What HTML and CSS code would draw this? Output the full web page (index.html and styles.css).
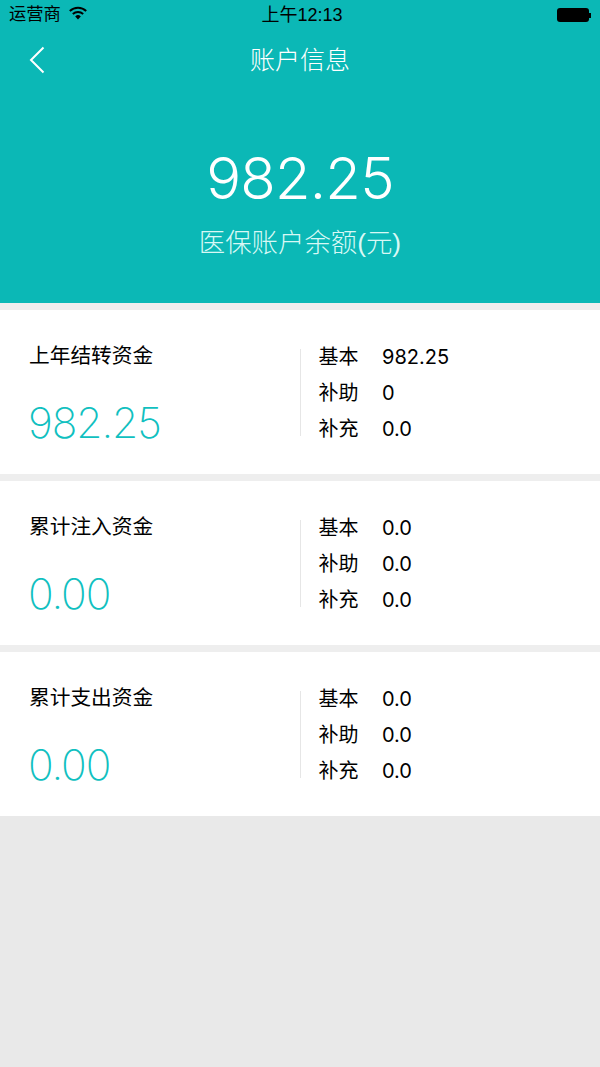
FILE: index.html
```html
<!DOCTYPE html>
<html lang="zh-CN">
<head>
    <meta charset="UTF-8">
    <meta name="viewport" content="width=device-width, initial-scale=1.0">
    <title>账户信息</title>
    <link rel="stylesheet" href="styles.css">
</head>
<body>
    <div class="header">
        <div class="status-bar">
            <div class="carrier">
                <span>运营商</span>
                <svg class="wifi" viewBox="0 0 18 14" width="18" height="14">
                    <path d="M0.8 5 A12 12 0 0 1 17.2 5" fill="none" stroke="#000" stroke-width="2"/>
                    <path d="M3.8 8 A8 8 0 0 1 14.2 8" fill="none" stroke="#000" stroke-width="2"/>
                    <path d="M6.2 10.4 L9 13.5 L11.8 10.4 A4 4 0 0 0 6.2 10.4 Z" fill="#000"/>
                </svg>
            </div>
            <div class="clock">上午12:13</div>
            <div class="battery"><div class="battery-body"></div><div class="battery-tip"></div></div>
        </div>
        <div class="nav">
            <svg class="back" viewBox="0 0 16 28" width="16" height="28">
                <path d="M14.5 1.5 L2 14 L14.5 26.5" fill="none" stroke="#fff" stroke-width="2"/>
            </svg>
            <div class="nav-title">账户信息</div>
        </div>
        <div class="balance">982.25</div>
        <div class="balance-label">医保账户余额(元)</div>
    </div>

    <div class="card">
        <div class="card-left">
            <div class="card-title">上年结转资金</div>
            <div class="card-amount">982.25</div>
        </div>
        <div class="card-right">
            <div class="row"><span class="row-label">基本</span><span>982.25</span></div>
            <div class="row"><span class="row-label">补助</span><span>0</span></div>
            <div class="row"><span class="row-label">补充</span><span>0.0</span></div>
        </div>
    </div>

    <div class="card">
        <div class="card-left">
            <div class="card-title">累计注入资金</div>
            <div class="card-amount">0.00</div>
        </div>
        <div class="card-right">
            <div class="row"><span class="row-label">基本</span><span>0.0</span></div>
            <div class="row"><span class="row-label">补助</span><span>0.0</span></div>
            <div class="row"><span class="row-label">补充</span><span>0.0</span></div>
        </div>
    </div>

    <div class="card">
        <div class="card-left">
            <div class="card-title">累计支出资金</div>
            <div class="card-amount">0.00</div>
        </div>
        <div class="card-right">
            <div class="row"><span class="row-label">基本</span><span>0.0</span></div>
            <div class="row"><span class="row-label">补助</span><span>0.0</span></div>
            <div class="row"><span class="row-label">补充</span><span>0.0</span></div>
        </div>
    </div>
</body>
</html>
```

FILE: styles.css
```css
html, body { margin: 0; padding: 0; }
body { width: 600px; min-height: 1067px; overflow: hidden; background: #e9e9e9; font-family: "Liberation Sans", "Noto Sans CJK SC", sans-serif; color: #000; }

.header { height: 303px; background: #0bb8b6; color: #fff; text-align: center; box-sizing: border-box; }
.status-bar { height: 30px; display: flex; align-items: center; justify-content: space-between; padding: 0 9px 0 9px; color: #000; position: relative; }
.carrier { display: flex; align-items: center; gap: 8px; font-size: 17.3px; line-height: 30px; margin-top: -3px; }
.wifi { margin-top: -2px; }
.clock { position: absolute; left: 4px; right: 0; top: 0; line-height: 30px; text-align: center; font-size: 18px; }
.battery { display: flex; align-items: center; }
.battery-body { width: 32px; height: 14px; background: #000; border-radius: 3px; }
.battery-tip { width: 2px; height: 5px; background: #000; }

.nav { height: 60px; position: relative; display: flex; align-items: center; justify-content: center; }
.back { position: absolute; left: 29px; top: 16px; }
.nav-title { font-size: 25px; font-weight: 300; margin-top: -4px; }
.balance { margin-top: 55px; font-family: Inter, "Liberation Sans", sans-serif; font-size: 58px; line-height: 66px; font-weight: 300; letter-spacing: -0.8px; }
.balance-label { margin-top: 15px; font-size: 26.4px; line-height: 34px; color: #d8f8f5; font-weight: 300; }

.card { height: 171px; border-top: 7px solid #eeeeee; background: #fff; display: flex; box-sizing: border-box; padding-top: 39px; }
.card-left { width: 271px; margin-left: 29px; }
.card-title { font-size: 20.7px; line-height: 16px; margin-top: -1px; }
.card-amount { margin-top: 34px; margin-left: -1px; font-family: Inter, "Liberation Sans", sans-serif; font-size: 42.5px; line-height: 50px; font-weight: 200; letter-spacing: -1.1px; color: #10c0c0; }
.card-right { height: 87px; border-left: 1px solid #e6e6e6; padding-left: 18px; font-family: Inter, "Liberation Sans", "Noto Sans CJK SC", sans-serif; font-size: 20px; }
.row { height: 36px; display: flex; line-height: 36px; margin-top: -10.5px; margin-bottom: 10.5px; margin-left: -0.5px; }
.row-label { width: 63.5px; }
```
